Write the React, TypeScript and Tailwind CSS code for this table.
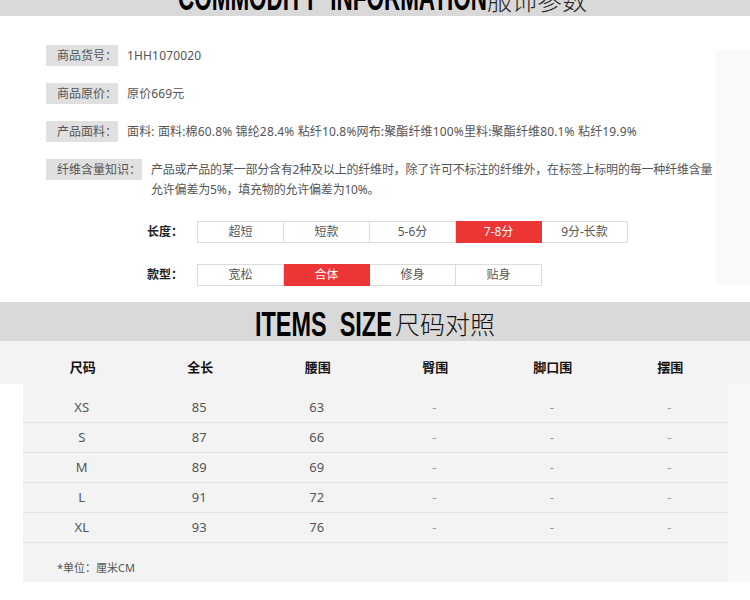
const INFO: [string, string][] = [
  ["商品货号：", "1HH1070020"],
  ["商品原价：", "原价669元"],
  ["产品面料：", "面料: 面料:棉60.8% 锦纶28.4% 粘纤10.8%网布:聚酯纤维100%里料:聚酯纤维80.1% 粘纤19.9%"],
];

const LENGTHS = ["超短", "短款", "5-6分", "7-8分", "9分-长款"];
const FITS = ["宽松", "合体", "修身", "贴身"];

const HEAD = ["尺码", "全长", "腰围", "臀围", "脚口围", "摆围"];
const SIZES: [string, number, number][] = [
  ["XS", 85, 63],
  ["S", 87, 66],
  ["M", 89, 69],
  ["L", 91, 72],
  ["XL", 93, 76],
];

function Options({ label, items, active }: { label: string; items: string[]; active: string }) {
  return (
    <div className="flex items-center pl-[147px]">
      <div className="w-[50px] font-bold text-[#222]">{label}</div>
      <div className="flex border-l border-[#dcdcdc]">
        {items.map((it) => (
          <div
            key={it}
            className={`w-[86px] h-[22px] flex items-center justify-center border-y border-r ${
              it === active ? "bg-[#ee3535] border-[#ee3535] text-white" : "border-[#dcdcdc] text-[#555]"
            }`}
          >
            {it}
          </div>
        ))}
      </div>
    </div>
  );
}

export default function App() {
  return (
    <div className="w-[750px] h-[600px] overflow-hidden bg-white font-['Noto_Sans','Noto_Sans_CJK_SC',sans-serif] text-[12px] text-[#555]">
      {/* commodity title, cut at the top */}
      <div className="h-[16px] bg-[#d9d9d9] overflow-hidden flex justify-center items-end pl-[15px]">
        <div className="flex items-end leading-none">
          <span className="w-[309px] font-['Liberation_Sans',sans-serif] font-bold text-[36px] text-black">
            <span className="inline-block whitespace-nowrap origin-left scale-x-[0.624]">COMMODITY&nbsp;&nbsp;INFORMATION</span>
          </span>
          <span className="mb-[4px] text-[25px] font-light text-[#222] font-['Noto_Sans_CJK_SC',sans-serif] leading-none">
            服饰参数
          </span>
        </div>
      </div>

      <div className="flex h-[286px]">
        <div className="flex-1 pt-[29px]">
          {INFO.map(([k, v]) => (
            <div key={k} className="flex ml-[46px] mb-[17px]">
              <div className="h-[21px] leading-[21px] bg-[#e0e0e0] pl-[11px] pr-[1px] text-[#555]">{k}</div>
              <div className="ml-[9px] leading-[21px] whitespace-nowrap tracking-[0.15px]">{v}</div>
            </div>
          ))}
          <div className="flex items-start ml-[46px]">
            <div className="h-[21px] leading-[21px] bg-[#e0e0e0] pl-[11px] pr-[1px] shrink-0">纤维含量知识：</div>
            <div className="ml-[9px] mt-[1px] leading-[20px] whitespace-nowrap tracking-[-0.2px]">
              产品或产品的某一部分含有2种及以上的纤维时，除了许可不标注的纤维外，在标签上标明的每一种纤维含量
              <br />
              允许偏差为5%，填充物的允许偏差为10%。
            </div>
          </div>
          <div className="mt-[21px]">
            <Options label="长度：" items={LENGTHS} active="7-8分" />
          </div>
          <div className="mt-[21px]">
            <Options label="款型：" items={FITS} active="合体" />
          </div>
        </div>
        <div className="w-[34px] pt-[34px]">
          <div className="h-[235px] bg-[#f9f9f9]" />
        </div>
      </div>

      {/* size title */}
      <div className="h-[39px] bg-[#d9d9d9] flex justify-center items-center pt-[4px]">
        <div className="flex items-center leading-none">
          <span className="w-[140px] font-['Liberation_Sans',sans-serif] font-bold text-[35px] text-black">
            <span className="inline-block whitespace-nowrap origin-left scale-x-[0.67]">ITEMS&nbsp;&nbsp;SIZE</span>
          </span>
          <span className="text-[25px] font-light text-[#111] font-['Noto_Sans_CJK_SC',sans-serif]">尺码对照</span>
        </div>
      </div>

      <div className="h-[43px] bg-[#f3f3f3] pt-[10px] flex items-center">
        <div className="ml-[24px] w-[705px] grid grid-cols-6">
          {HEAD.map((h) => (
            <div key={h} className="text-center font-bold text-[13px] text-[#111]">
              {h}
            </div>
          ))}
        </div>
      </div>

      <div className="flex h-[198px]">
        <div className="w-[23px] bg-white" />
        <div className="w-[705px] bg-[#f3f3f3] pt-[9px]">
          {SIZES.map(([s, len, waist]) => (
            <div key={s} className="h-[30px] grid grid-cols-6 items-center border-b border-[#e2e2e2] text-[13px] text-[#555]">
              <div className="text-center">{s}</div>
              <div className="text-center">{len}</div>
              <div className="text-center">{waist}</div>
              <div className="text-center text-[#999]">-</div>
              <div className="text-center text-[#999]">-</div>
              <div className="text-center text-[#999]">-</div>
            </div>
          ))}
          <div className="pt-[17px] pl-[34px] leading-[16px] text-[11px] text-[#555]">*单位：厘米CM</div>
        </div>
        <div className="w-[22px] bg-[#f8f8f8]" />
      </div>
    </div>
  );
}
